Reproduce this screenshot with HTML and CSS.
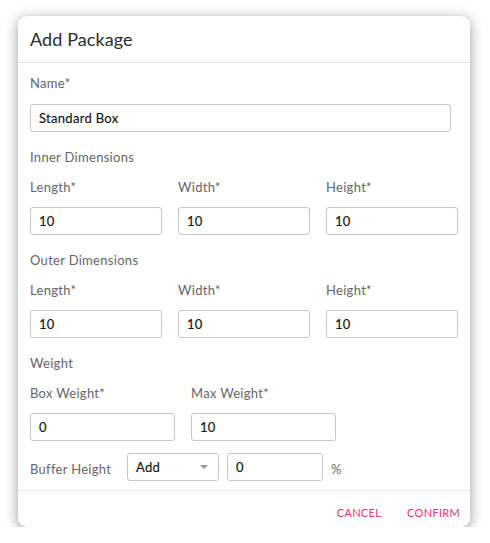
FILE: index.html
```html
<!DOCTYPE html>
<html lang="en">
<head>
  <meta charset="UTF-8" />
  <title>Add Package</title>
  <link rel="stylesheet" href="styles.css">
</head>
<body>
  <div class="dialog">
    <div class="dialog-header">
      <h1>Add Package</h1>
    </div>

    <form class="dialog-body">
      <label class="field-label first">Name*</label>
      <input class="input name-input" type="text" value="Standard Box" />

      <div class="section-title">Inner Dimensions</div>
      <div class="row three">
        <div class="field">
          <label class="field-label">Length*</label>
          <input class="input" type="text" value="10" />
        </div>
        <div class="field">
          <label class="field-label">Width*</label>
          <input class="input" type="text" value="10" />
        </div>
        <div class="field">
          <label class="field-label">Height*</label>
          <input class="input" type="text" value="10" />
        </div>
      </div>

      <div class="section-title">Outer Dimensions</div>
      <div class="row three">
        <div class="field">
          <label class="field-label">Length*</label>
          <input class="input" type="text" value="10" />
        </div>
        <div class="field">
          <label class="field-label">Width*</label>
          <input class="input" type="text" value="10" />
        </div>
        <div class="field">
          <label class="field-label">Height*</label>
          <input class="input" type="text" value="10" />
        </div>
      </div>

      <div class="section-title">Weight</div>
      <div class="row two">
        <div class="field">
          <label class="field-label">Box Weight*</label>
          <input class="input" type="text" value="0" />
        </div>
        <div class="field">
          <label class="field-label">Max Weight*</label>
          <input class="input" type="text" value="10" />
        </div>
      </div>

      <div class="buffer-row">
        <span class="buffer-label">Buffer Height</span>
        <div class="select">
          <span>Add</span>
          <span class="caret"></span>
        </div>
        <input class="input buffer-input" type="text" value="0" />
        <span class="unit">%</span>
      </div>
    </form>

    <div class="dialog-footer">
      <button type="button" class="text-btn">Cancel</button>
      <button type="button" class="text-btn">Confirm</button>
    </div>
  </div>
</body>
</html>
```

FILE: styles.css
```css
body {
  margin: 0;
  background: #fff;
  font-family: Lato, "Open Sans", sans-serif;
}

.dialog {
  margin: 16px 0 0 18px;
  width: 452px;
  height: 511px;
  background: #fff;
  border-radius: 9px;
  box-shadow: 0 3px 14px rgba(0, 0, 0, 0.4);
  display: flex;
  flex-direction: column;
}

.dialog-header {
  height: 46px;
  padding: 0 12px;
  display: flex;
  align-items: center;
  border-bottom: 1px solid #e4e4e4;
}

.dialog-header h1 {
  margin: 0;
  font-size: 18px;
  font-weight: normal;
  letter-spacing: 0.1px;
  color: #2b2b2b;
}

.dialog-body {
  flex: 1;
  padding: 0 12px;
  display: flex;
  flex-direction: column;
  align-items: flex-start;
  border-bottom: 1px solid #e8e8e8;
}

.field-label,
.section-title,
.buffer-label {
  display: block;
  font-size: 13px;
  line-height: 16px;
  letter-spacing: 0.3px;
  color: #666;
}

.field-label.first {
  margin-top: 12px;
}

.field .field-label {
  margin-bottom: 12px;
}

.name-input {
  margin-top: 13px;
  width: 421px;
}

.section-title {
  margin-top: 17px;
  margin-bottom: 14px;
}

.input {
  box-sizing: border-box;
  height: 28px;
  padding: 0 8px;
  border: 1px solid #c8c8c8;
  border-radius: 3px;
  font-family: Lato, "Open Sans", sans-serif;
  font-size: 13px;
  font-weight: normal;
  letter-spacing: 0.3px;
  -webkit-text-stroke: 0.15px #111;
  color: #111;
  background: #fff;
}

.row {
  display: flex;
  gap: 16px;
}

.row.three .input {
  width: 132px;
}

.row.two .input {
  width: 145px;
}

.buffer-row {
  margin-top: 12px;
  display: flex;
  align-items: center;
  gap: 8px;
}

.buffer-label {
  width: 89px;
  padding-top: 3px;
}

.select {
  box-sizing: border-box;
  width: 92px;
  height: 28px;
  padding: 0 8px;
  border: 1px solid #c8c8c8;
  border-radius: 3px;
  display: flex;
  align-items: center;
  justify-content: space-between;
  font-size: 13px;
  letter-spacing: 0.3px;
  -webkit-text-stroke: 0.15px #111;
  color: #111;
}

.caret {
  width: 0;
  height: 0;
  margin-right: 2px;
  border-left: 4px solid transparent;
  border-right: 4px solid transparent;
  border-top: 4px solid #999;
}

.buffer-input {
  width: 96px;
}

.unit {
  font-size: 13px;
  color: #666;
  padding-top: 4px;
}

.dialog-footer {
  box-sizing: border-box;
  height: 36px;
  padding: 15px 10px 0 0;
  display: flex;
  align-items: flex-start;
  justify-content: flex-end;
  gap: 26px;
}

.text-btn {
  padding: 0;
  border: none;
  background: none;
  font-family: Lato, "Open Sans", sans-serif;
  font-size: 11px;
  line-height: 13px;
  text-transform: uppercase;
  letter-spacing: 0.3px;
  color: #e8347a;
  cursor: pointer;
}
```
